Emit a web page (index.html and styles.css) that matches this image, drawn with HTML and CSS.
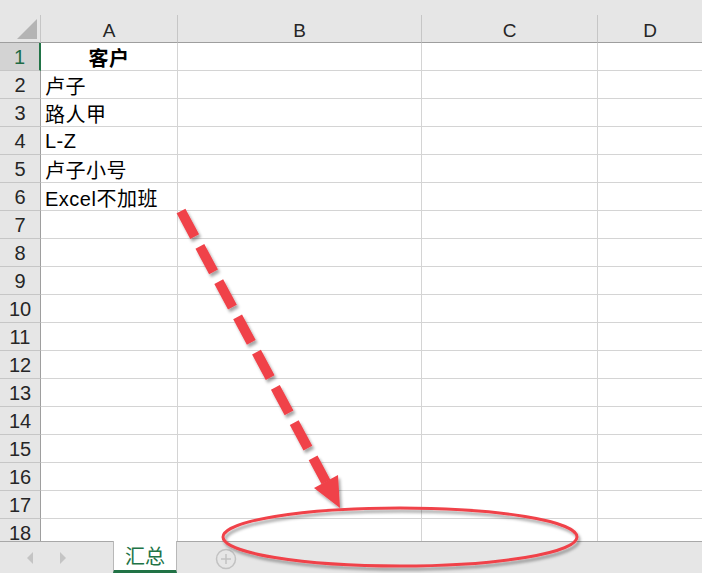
FILE: index.html
```html
<!DOCTYPE html>
<html>
<head>
<meta charset="utf-8">
<link rel="stylesheet" href="styles.css">
</head>
<body>
<div class="app">
  <div class="sheet-area">
    <div class="topband"></div>
    <div class="grid">
      <div class="corner"><span class="corner-tri"></span></div>
      <div class="colhead">A</div>
      <div class="colhead">B</div>
      <div class="colhead">C</div>
      <div class="colhead last">D</div>

      <div class="rowhead sel">1</div><div class="cell bold center">客户</div><div class="cell"></div><div class="cell"></div><div class="cell last"></div>
      <div class="rowhead">2</div><div class="cell">卢子</div><div class="cell"></div><div class="cell"></div><div class="cell last"></div>
      <div class="rowhead">3</div><div class="cell">路人甲</div><div class="cell"></div><div class="cell"></div><div class="cell last"></div>
      <div class="rowhead">4</div><div class="cell">L-Z</div><div class="cell"></div><div class="cell"></div><div class="cell last"></div>
      <div class="rowhead">5</div><div class="cell">卢子小号</div><div class="cell"></div><div class="cell"></div><div class="cell last"></div>
      <div class="rowhead">6</div><div class="cell">Excel不加班</div><div class="cell"></div><div class="cell"></div><div class="cell last"></div>
      <div class="rowhead">7</div><div class="cell"></div><div class="cell"></div><div class="cell"></div><div class="cell last"></div>
      <div class="rowhead">8</div><div class="cell"></div><div class="cell"></div><div class="cell"></div><div class="cell last"></div>
      <div class="rowhead">9</div><div class="cell"></div><div class="cell"></div><div class="cell"></div><div class="cell last"></div>
      <div class="rowhead">10</div><div class="cell"></div><div class="cell"></div><div class="cell"></div><div class="cell last"></div>
      <div class="rowhead">11</div><div class="cell"></div><div class="cell"></div><div class="cell"></div><div class="cell last"></div>
      <div class="rowhead">12</div><div class="cell"></div><div class="cell"></div><div class="cell"></div><div class="cell last"></div>
      <div class="rowhead">13</div><div class="cell"></div><div class="cell"></div><div class="cell"></div><div class="cell last"></div>
      <div class="rowhead">14</div><div class="cell"></div><div class="cell"></div><div class="cell"></div><div class="cell last"></div>
      <div class="rowhead">15</div><div class="cell"></div><div class="cell"></div><div class="cell"></div><div class="cell last"></div>
      <div class="rowhead">16</div><div class="cell"></div><div class="cell"></div><div class="cell"></div><div class="cell last"></div>
      <div class="rowhead">17</div><div class="cell"></div><div class="cell"></div><div class="cell"></div><div class="cell last"></div>
      <div class="rowhead">18</div><div class="cell"></div><div class="cell"></div><div class="cell"></div><div class="cell last"></div>
    </div>
  </div>
  <div class="tabbar">
    <div class="nav">
      <svg class="nav-ico" width="8" height="12" viewBox="0 0 8 12"><polygon points="7,0 7,12 1,6" fill="#c4c4c4"/></svg>
      <svg class="nav-ico" width="8" height="12" viewBox="0 0 8 12"><polygon points="1,0 1,12 7,6" fill="#c4c4c4"/></svg>
    </div>
    <div class="tab">汇总</div>
    <div class="add">
      <svg width="22" height="22" viewBox="0 0 22 22"><circle cx="11" cy="11" r="9.5" fill="none" stroke="#c2c2c2" stroke-width="1.5"/><path d="M11 6v10M6 11h10" stroke="#c2c2c2" stroke-width="1.5"/></svg>
    </div>
  </div>

  <svg class="overlay" width="702" height="573" viewBox="0 0 702 573">
    <defs>
      <filter id="sh" x="-20%" y="-20%" width="140%" height="140%">
        <feDropShadow dx="2" dy="3" stdDeviation="1.6" flood-color="#000" flood-opacity="0.35"/>
      </filter>
    </defs>
    <g filter="url(#sh)">
      <line x1="181" y1="211" x2="326" y2="482" stroke="#f0424a" stroke-width="10" stroke-dasharray="29 11" stroke-linecap="butt"/>
      <polygon points="314,488 338,475 340,508" fill="#f0424a"/>
      <ellipse cx="400" cy="537" rx="177" ry="29" fill="none" stroke="#f0424a" stroke-width="3"/>
    </g>
  </svg>
</div>
</body>
</html>
```

FILE: styles.css
```css
* { box-sizing: border-box; }
html, body { margin: 0; padding: 0; }
body {
  width: 702px;
  height: 573px;
  overflow: hidden;
  background: #fff;
  font-family: "Liberation Sans", "Noto Sans CJK SC", sans-serif;
}
.app {
  position: relative;
  width: 702px;
  height: 573px;
  display: flex;
  flex-direction: column;
}
.sheet-area {
  height: 541px;
  overflow: hidden;
  background: #fff;
}
.topband {
  height: 15px;
  background: #e6e6e6;
}
.grid {
  display: grid;
  grid-template-columns: 41px 137px 244px 176px 1fr;
  grid-template-rows: 28px;
  grid-auto-rows: 28px;
}
.corner {
  background: #e6e6e6;
  border-right: 1px solid #c6c6c6;
  border-bottom: 1px solid #9e9e9e;
  position: relative;
}
.corner-tri {
  position: absolute;
  right: 3px;
  bottom: 3px;
  width: 0;
  height: 0;
  border-left: 20px solid transparent;
  border-bottom: 20px solid #b4b4b4;
}
.colhead {
  background: #e6e6e6;
  border-right: 1px solid #c6c6c6;
  border-bottom: 1px solid #9e9e9e;
  display: flex;
  align-items: center;
  justify-content: center;
  font-size: 19px;
  color: #262626;
  padding-top: 5px;
}
.colhead.last { border-right: none; }
.rowhead {
  background: #e6e6e6;
  border-right: 1px solid #9e9e9e;
  border-bottom: 1px solid #c6c6c6;
  display: flex;
  align-items: center;
  justify-content: center;
  font-size: 20px;
  color: #262626;
  padding-top: 2px;
}
.rowhead.sel {
  background: #d3d3d3;
  color: #1e6b45;
  border-right: 2px solid #217346;
}
.cell {
  border-right: 1px solid #d4d4d4;
  border-bottom: 1px solid #d4d4d4;
  display: flex;
  align-items: center;
  padding-left: 4px;
  padding-top: 1px;
  font-size: 20px;
  letter-spacing: 0.5px;
  color: #000;
  white-space: nowrap;
}
.cell.last { border-right: none; }
.cell.bold { font-weight: bold; }
.cell.center { justify-content: center; padding-left: 0; }

.tabbar {
  height: 32px;
  background: #e6e6e6;
  border-top: 1px solid #a8a8a8;
  display: flex;
  align-items: stretch;
}
.nav {
  width: 113px;
  display: flex;
  align-items: center;
  gap: 25px;
  padding-left: 26px;
}
.tab {
  width: 64px;
  margin-top: -1px;
  background: #fff;
  border-left: 1px solid #b8b8b8;
  border-right: 1px solid #b8b8b8;
  border-bottom: 3px solid #217346;
  color: #217346;
  font-size: 20px;
  display: flex;
  align-items: center;
  justify-content: center;
}
.add {
  display: flex;
  align-items: center;
  padding-left: 38px;
  padding-top: 3px;
}
.overlay {
  position: absolute;
  left: 0;
  top: 0;
  pointer-events: none;
}
```
